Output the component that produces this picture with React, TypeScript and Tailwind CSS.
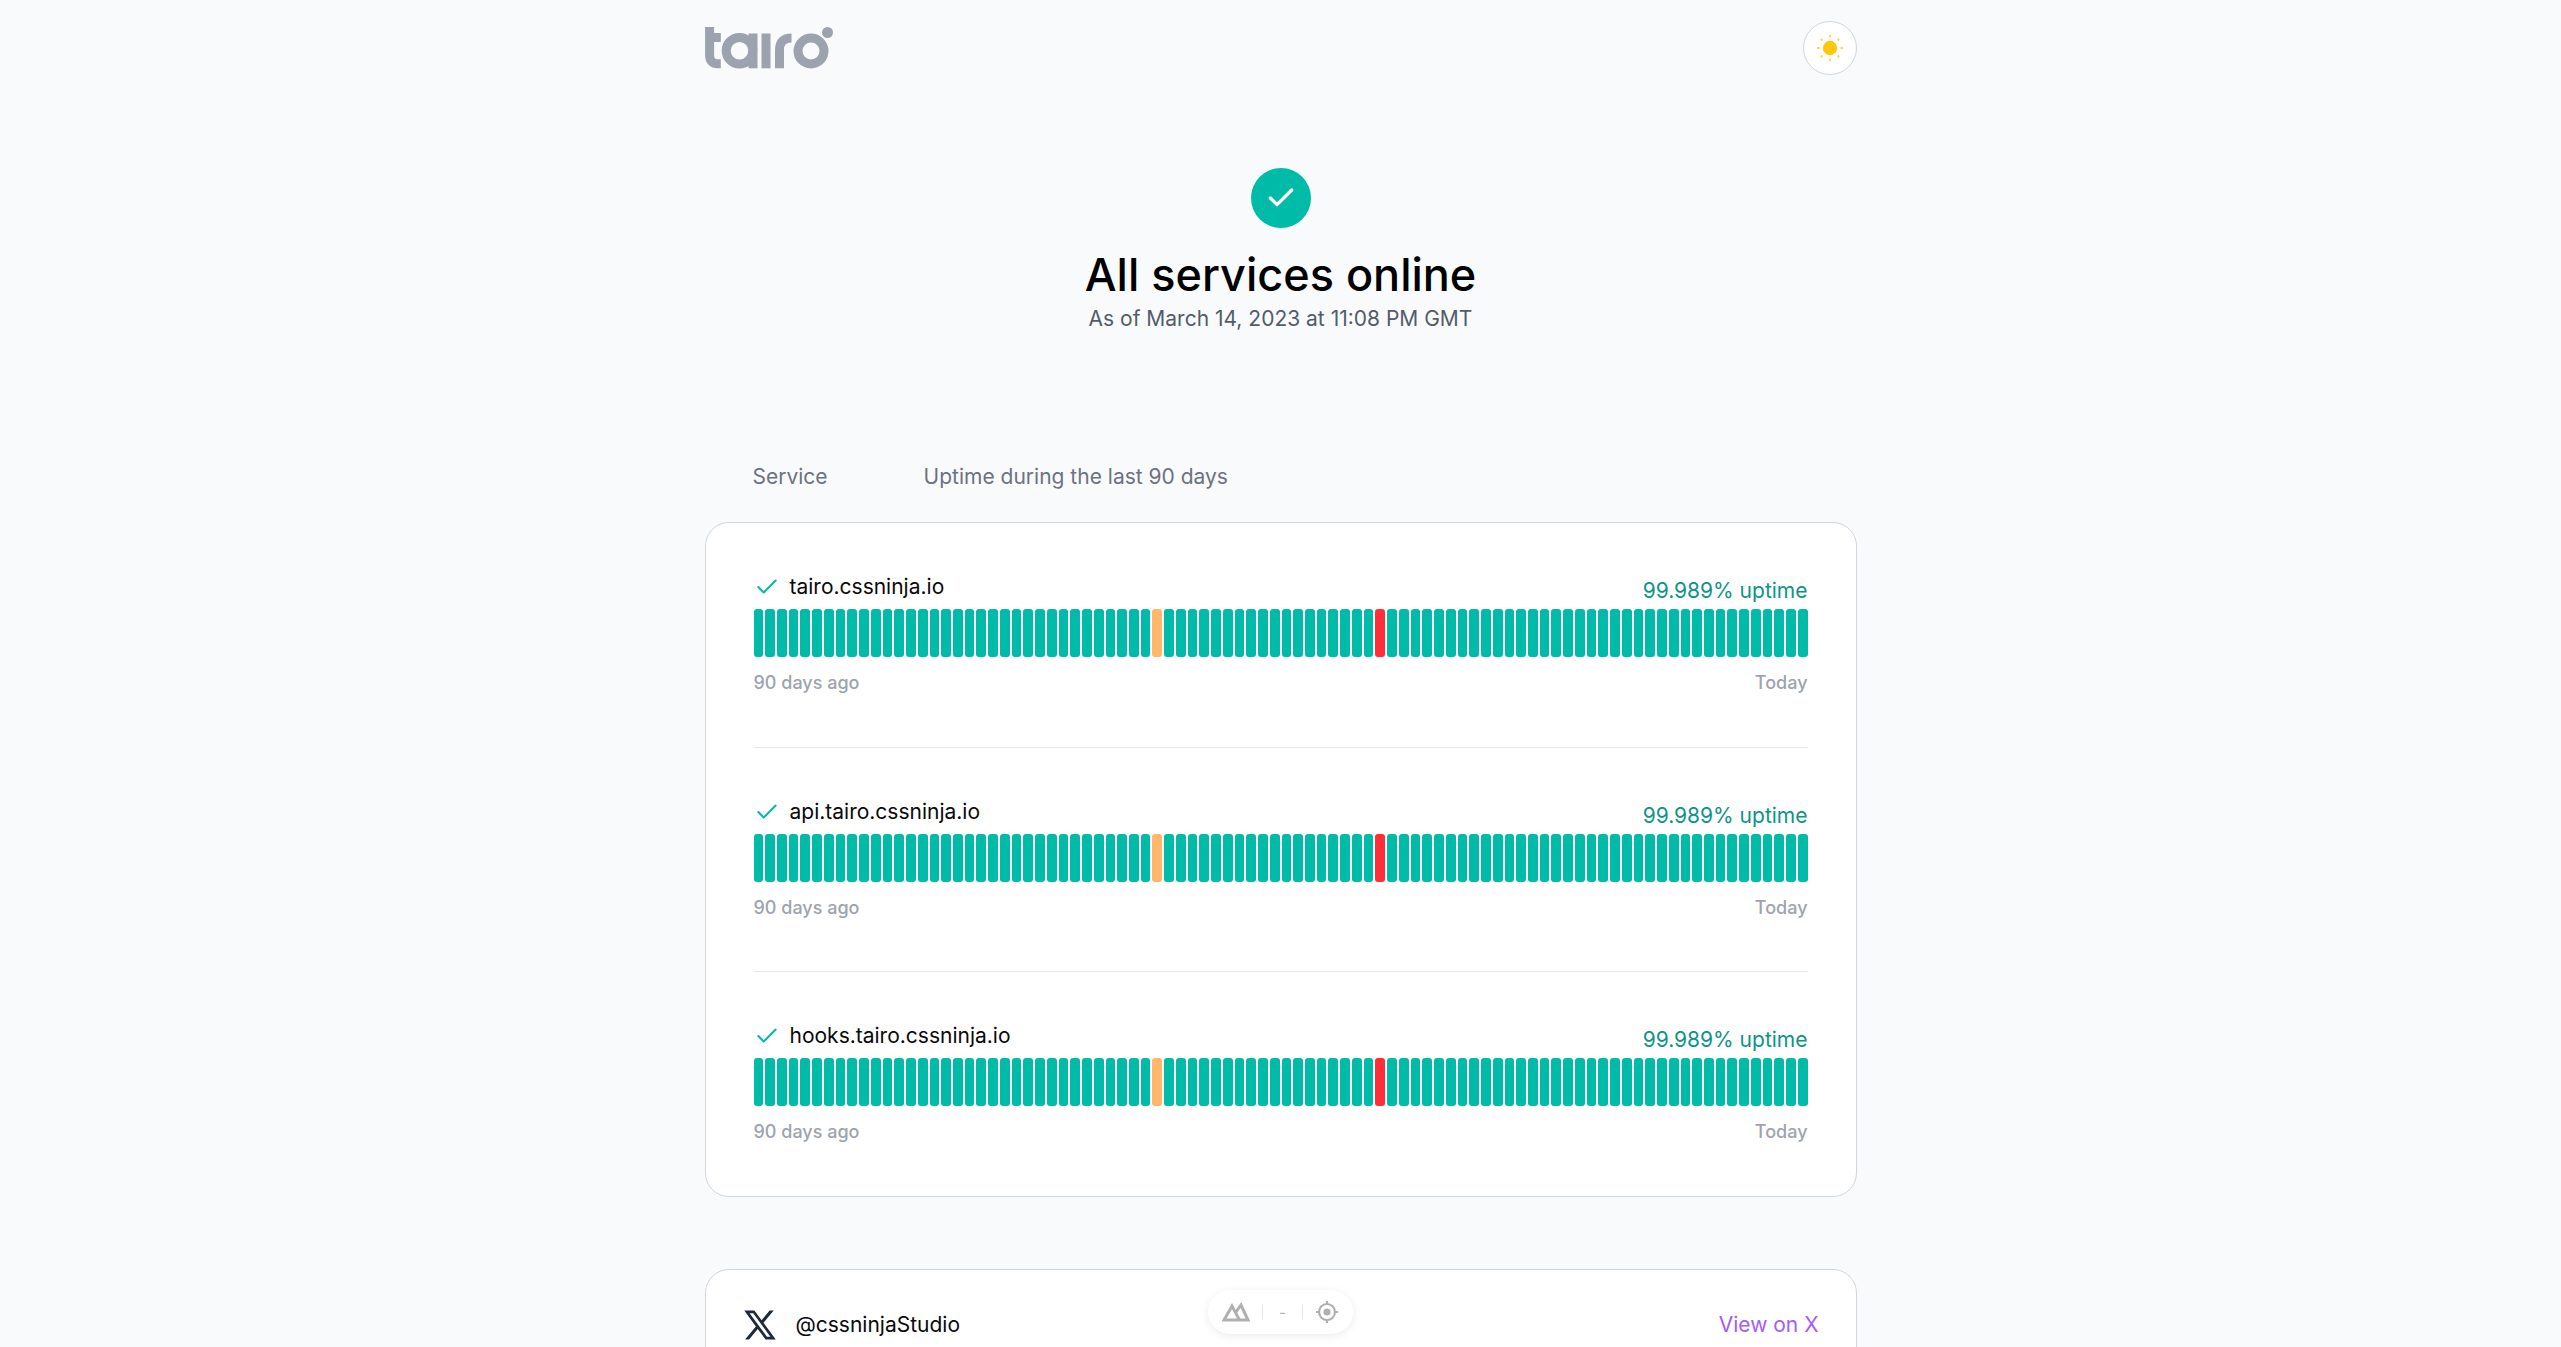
import { Check } from "lucide-react";

const services = ["tairo.cssninja.io", "api.tairo.cssninja.io", "hooks.tairo.cssninja.io"];

const days = Array.from({ length: 90 }, (_, i) => i);

const TairoLogo = () => (
  <svg width="130" height="44" viewBox="0 0 130 44" fill="none" className="block">
    <g stroke="#9ca3af" strokeWidth="9">
      {/* t */}
      <path d="M4.6 0V28Q4.6 36.8 13 36.8H15.8" />
      <path d="M4.6 10.5H15.8" />
      {/* a */}
      <circle cx="34.5" cy="23.7" r="13.3" />
      <path d="M48 6.5V41.3" />
      {/* i */}
      <path d="M61 6.5V41.3" />
      {/* r */}
      <path d="M74.5 41.3V23Q74.5 11 86.5 11" />
      {/* o */}
      <circle cx="106" cy="24" r="13" />
    </g>
    <circle cx="122.5" cy="5.5" r="5.5" fill="#9ca3af" />
  </svg>
);

const SunIcon = () => (
  <svg width="28" height="28" viewBox="0 0 28 28" fill="none">
    <circle cx="14" cy="14" r="7.2" fill="#fec80a" />
    <g stroke="#fdd34a" strokeWidth="1.8">
      <path d="M14 1V3.5M14 24.5V27M1 14H3.5M24.5 14H27M4.8 4.8L6.5 6.5M21.5 21.5L23.2 23.2M23.2 4.8L21.5 6.5M6.5 21.5L4.8 23.2" />
    </g>
  </svg>
);

const ServiceRow = ({ name, last }: { name: string; last: boolean }) => (
  <div className={last ? "" : "border-b border-[#e5e7eb] pb-[51.5px] mb-[48px]"}>
    <div className="flex items-end justify-between h-[38px]">
      <div className="flex items-center gap-[10px] mb-[8px]">
        <Check className="w-[26px] h-[26px] text-[#00bba7]" strokeWidth={1.85} />
        <span className="text-[21px] leading-[28px] text-[#09090b]">{name}</span>
      </div>
      <span className="text-[21px] leading-[28px] text-[#0d9488] mb-[4px]">99.989% uptime</span>
    </div>
    <div className="flex gap-[2px] h-[48px]">
      {days.map((d) => (
        <div
          key={d}
          className={`flex-1 rounded-[3px] ${
            d === 34 ? "bg-[#ffb86a]" : d === 53 ? "bg-[#ff2e38]" : "bg-[#00bba7]"
          }`}
        />
      ))}
    </div>
    <div className="flex justify-between mt-[14px] text-[18px] leading-[24px] font-medium text-[#9ca3af]">
      <span>90 days ago</span>
      <span>Today</span>
    </div>
  </div>
);

export default function App() {
  return (
    <div className="relative h-[1347px] overflow-hidden bg-[#f9fafc] font-['Inter',sans-serif]">
      <div className="w-[1152px] mx-auto">
        {/* top bar */}
        <header className="flex items-start justify-between pt-[21px] h-[168px]">
          <div className="pt-[6px]">
            <TairoLogo />
          </div>
          <div className="w-[54px] h-[54px] rounded-full border border-[#d1d5db] bg-white flex items-center justify-center">
            <SunIcon />
          </div>
        </header>

        {/* status */}
        <section className="flex flex-col items-center">
          <div className="w-[60px] h-[60px] rounded-full bg-[#00bba7] flex items-center justify-center">
            <Check className="w-[32px] h-[32px] text-white" strokeWidth={2.5} />
          </div>
          <h1 className="mt-[19px] text-[45px] leading-[56px] font-[450] text-black">All services online</h1>
          <p className="text-[21px] leading-[28px] text-[#525c6b] mt-[2px]">As of March 14, 2023 at 11:08 PM GMT</p>
        </section>

        <div className="flex mt-[130px] px-[48px] gap-[96px] text-[21px] leading-[28px] text-[#6b7280]">
          <span>Service</span>
          <span>Uptime during the last 90 days</span>
        </div>

        <div className="mt-[31px] rounded-[24px] border border-[#d1d5db] bg-white px-[48px] pt-[48px] pb-[52px]">
          {services.map((s, i) => (
            <ServiceRow key={s} name={s} last={i === services.length - 1} />
          ))}
        </div>

        <div className="mt-[72px] rounded-[24px] border border-[#d1d5db] bg-white pl-[38px] pr-[37px] pt-[40px] pb-[40px] flex items-center justify-between">
          <div className="flex items-center gap-[20px]">
            <svg width="32" height="30" viewBox="0 0 24 22" fill="#1e293b" fillRule="evenodd">
              <path d="M0.2 0.2H7.8L13.2 7.4L19.2 0.2H22.3L14.6 9.3L23.8 21.8H16.2L10.3 14L3.8 21.8H0.8L8.9 12.2ZM4.2 2.1L17.2 19.9H19.8L6.9 2.1Z" />
            </svg>
            <span className="text-[21px] leading-[28px] text-[#09090b]">@cssninjaStudio</span>
          </div>
          <span className="text-[21px] leading-[28px] text-[#a25cff]">View on X</span>
        </div>
      </div>

      {/* devtools pill */}
      <div className="absolute left-[1208px] top-[1290px] h-[44px] w-[145px] rounded-full bg-white shadow-[0_2px_10px_rgba(0,0,0,0.08)] flex items-center justify-center gap-[12px] text-[#b0b0b0]">
        <svg width="28" height="20" viewBox="0 0 28 20" fill="none" stroke="currentColor" strokeWidth="3">
          <path d="M2 18L10 4L17.5 18ZM14 10L19 3L26 18H17.5" />
        </svg>
        <div className="w-px h-[14px] bg-[#e5e5e5]" />
        <span className="text-[15px] leading-none px-[4px]">-</span>
        <div className="w-px h-[14px] bg-[#e5e5e5]" />
        <svg width="24" height="24" viewBox="0 0 24 24" fill="none" stroke="currentColor" strokeWidth="2.2">
          <circle cx="12" cy="12" r="8" />
          <circle cx="12" cy="12" r="2.5" fill="currentColor" />
          <path d="M12 1V4M12 20V23M1 12H4M20 12H23" />
        </svg>
      </div>
    </div>
  );
}
